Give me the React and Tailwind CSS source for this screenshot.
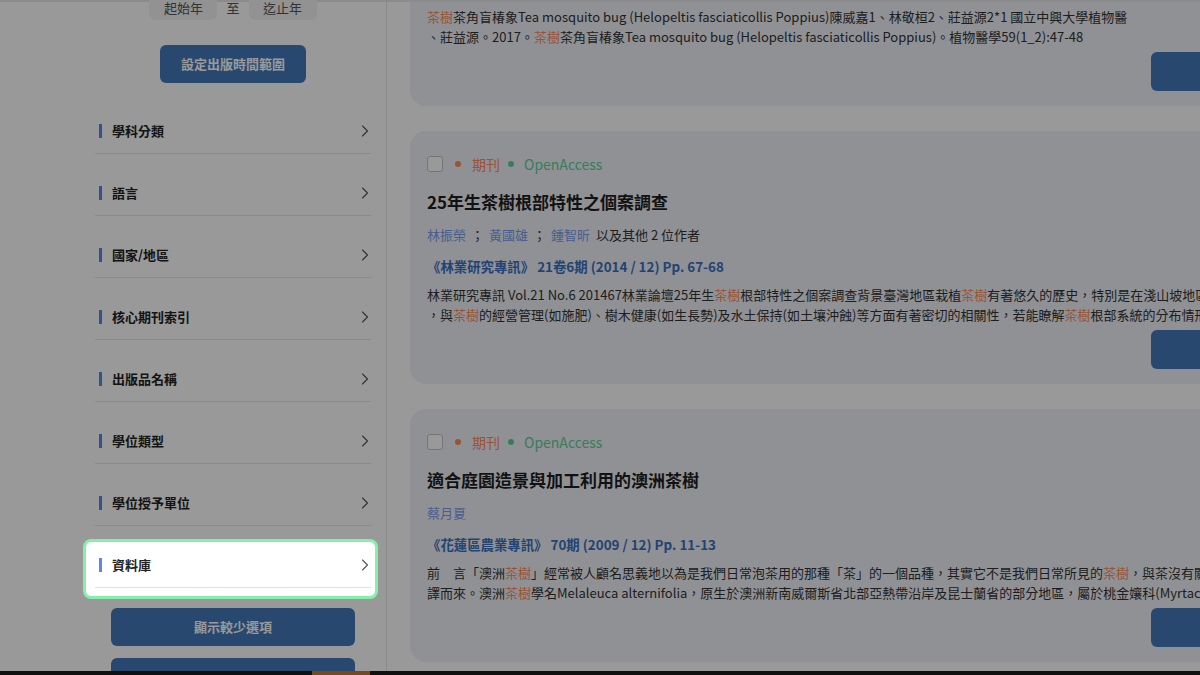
import React from "react";
import { ChevronRight } from "lucide-react";

const FONT = "font-['Noto_Sans_CJK_TC','Noto_Sans',sans-serif]";

const FILTERS = [
  "學科分類",
  "語言",
  "國家/地區",
  "核心期刊索引",
  "出版品名稱",
  "學位類型",
  "學位授予單位",
  "資料庫",
];

// highlight the search keyword inside a line of text
function Hl({ text }) {
  const parts = text.split("茶樹");
  return (
    <>
      {parts.map((p, i) => (
        <React.Fragment key={i}>
          {p}
          {i < parts.length - 1 && <span className="text-[#ff8a5a]">茶樹</span>}
        </React.Fragment>
      ))}
    </>
  );
}

const RESULTS = [
  {
    title: "茶樹茶角盲椿象Tea mosquito bug",
    authors: ["陳威嘉", "林敬桓", "莊益源"],
    more: null,
    journal: "《植物醫學》 59卷1_2期 (2017 / 06) Pp. 47-48",
    lines: [
      "茶樹茶角盲椿象Tea mosquito bug (Helopeltis fasciaticollis Poppius)陳威嘉1、林敬桓2、莊益源2*1 國立中興大學植物醫",
      "、莊益源。2017。茶樹茶角盲椿象Tea mosquito bug (Helopeltis fasciaticollis Poppius)。植物醫學59(1_2):47-48",
    ],
  },
  {
    title: "25年生茶樹根部特性之個案調查",
    authors: ["林振榮", "黃國雄", "鍾智昕"],
    more: "以及其他 2 位作者",
    journal: "《林業研究專訊》 21卷6期 (2014 / 12) Pp. 67-68",
    lines: [
      "林業研究專訊 Vol.21 No.6 201467林業論壇25年生茶樹根部特性之個案調查背景臺灣地區栽植茶樹有著悠久的歷史，特別是在淺山坡地區，",
      "，與茶樹的經營管理(如施肥)、樹木健康(如生長勢)及水土保持(如土壤沖蝕)等方面有著密切的相關性，若能瞭解茶樹根部系統的分布情形，",
    ],
  },
  {
    title: "適合庭園造景與加工利用的澳洲茶樹",
    authors: ["蔡月夏"],
    more: null,
    journal: "《花蓮區農業專訊》 70期 (2009 / 12) Pp. 11-13",
    lines: [
      "前　言「澳洲茶樹」經常被人顧名思義地以為是我們日常泡茶用的那種「茶」的一個品種，其實它不是我們日常所見的茶樹，與茶沒有關係，",
      "譯而來。澳洲茶樹學名Melaleuca alternifolia，原生於澳洲新南威爾斯省北部亞熱帶沿岸及昆士蘭省的部分地區，屬於桃金孃科(Myrtaceae)",
    ],
  },
];

function FilterItem({ label, active }) {
  return (
    <div className={`relative mt-4 ${active ? "z-50" : ""}`}>
      {active && (
        <div className="absolute -top-[3px] -bottom-[11px] -left-3 -right-[7px] -z-10 rounded-lg border-[3px] border-[#86efac] bg-white" />
      )}
      <div className="flex items-center h-[45px] pt-[13px] pb-3 cursor-pointer">
        <span className="ml-1 w-[3px] h-[14px] bg-[#5b87e6]" />
        <span className="ml-[10px] text-[13px] leading-5 font-bold text-[#222]">{label}</span>
        <ChevronRight size={20} strokeWidth={1.3} className="ml-auto -mr-1 text-[#555]" />
      </div>
      <div className={`h-px ${active ? "bg-[#dde1e6]" : "bg-[#e5e7eb]"}`} />
    </div>
  );
}

function Sidebar() {
  return (
    <aside className="w-[387px] shrink-0 border-r border-[#e6e6e6] pl-[95px] pr-[15px] flex flex-col">
      <div className="-mt-2 shrink-0 flex items-end justify-center gap-[9px]">
        <div className="w-[68px] h-[26px] pb-1 rounded-b-md bg-[#f3f4f6] flex items-end justify-center text-[13px] leading-4 text-[#555]">起始年</div>
        <span className="pb-1 text-[13px] leading-4 text-[#555]">至</span>
        <div className="w-[68px] h-[26px] pb-1 rounded-b-md bg-[#f3f4f6] flex items-end justify-center text-[13px] leading-4 text-[#555]">迄止年</div>
      </div>
      <button className="mx-auto mt-[25px] w-[146px] h-[38px] shrink-0 rounded-md bg-[#4478bb] text-white text-[13px] font-bold">
        設定出版時間範圍
      </button>
      <div className="mt-[9px] shrink-0">
        {FILTERS.map((f) => (
          <FilterItem key={f} label={f} active={f === "資料庫"} />
        ))}
      </div>
      <button className="mx-auto mt-5 w-[244px] h-[38px] shrink-0 rounded-md bg-[#4478bb] text-white text-[13px] font-bold">
        顯示較少選項
      </button>
      <button className="mx-auto mt-3 w-[244px] h-[38px] shrink-0 rounded-md bg-[#4478bb] text-white text-[13px] font-bold">
        匯出結果
      </button>
    </aside>
  );
}

function ResultCard({ r }) {
  return (
    <div className="w-[919px] shrink-0 rounded-2xl bg-[#f0f2f8] pt-[23px] pb-[15px] pl-[17px] pr-[18px] overflow-hidden">
      <div className="flex items-center h-5 text-[14px]">
        <span className="w-4 h-4 rounded-[3px] border border-[#c4c4c4] bg-white" />
        <span className="ml-3 w-[6px] h-[6px] rounded-full bg-[#ff8a5a]" />
        <span className="ml-[11px] text-[#ff8a5a]">期刊</span>
        <span className="ml-2 w-[6px] h-[6px] rounded-full bg-[#5cd096]" />
        <span className="ml-[10px] text-[#5cd096]">OpenAccess</span>
      </div>
      <h2 className="mt-[15px] text-[17px] leading-[26px] font-bold text-[#1f1f1f]">{r.title}</h2>
      <div className="mt-[10px] text-[13px] leading-5 text-[#333]">
        {r.authors.map((a, i) => (
          <React.Fragment key={a}>
            <span className="text-[#7b9cf0]">{a}</span>
            {i < r.authors.length - 1 && <span className="mx-[5px]">；</span>}
          </React.Fragment>
        ))}
        {r.more && <span className="ml-[6px]">{r.more}</span>}
      </div>
      <div className="mt-[11px] text-[13.4px] leading-5 font-semibold text-[#3a70c0]">{r.journal}</div>
      <div className="mt-[9px] text-[13px] leading-5 text-[#333] whitespace-nowrap">
        {r.lines.map((l, i) => (
          <div key={i}>
            <Hl text={l} />
          </div>
        ))}
      </div>
      <div className="mt-[5px] flex justify-end">
        <button className="w-[160px] h-[39px] rounded-md bg-[#4478bb] text-white text-[13px] font-bold">閱讀全文</button>
      </div>
    </div>
  );
}

export default function App() {
  return (
    <div className={`relative h-screen w-full overflow-hidden flex flex-col bg-white ${FONT}`}>
      <div className="h-[2px] shrink-0 bg-[#e8e8e8]" />
      <div className="flex flex-1 min-h-0">
        <Sidebar />
        <main className="flex-1 overflow-hidden pl-[23px]">
          <div className="-mt-[149px] flex flex-col gap-[25px]">
            {RESULTS.map((r) => (
              <ResultCard key={r.title} r={r} />
            ))}
          </div>
        </main>
      </div>
      <div className="h-1 shrink-0 flex bg-[#1c1c1c]">
        <div className="ml-[312px] w-[58px] bg-[#c87832]" />
      </div>
      {/* tour overlay */}
      <div className="fixed inset-0 z-40 bg-black/40" />
    </div>
  );
}
